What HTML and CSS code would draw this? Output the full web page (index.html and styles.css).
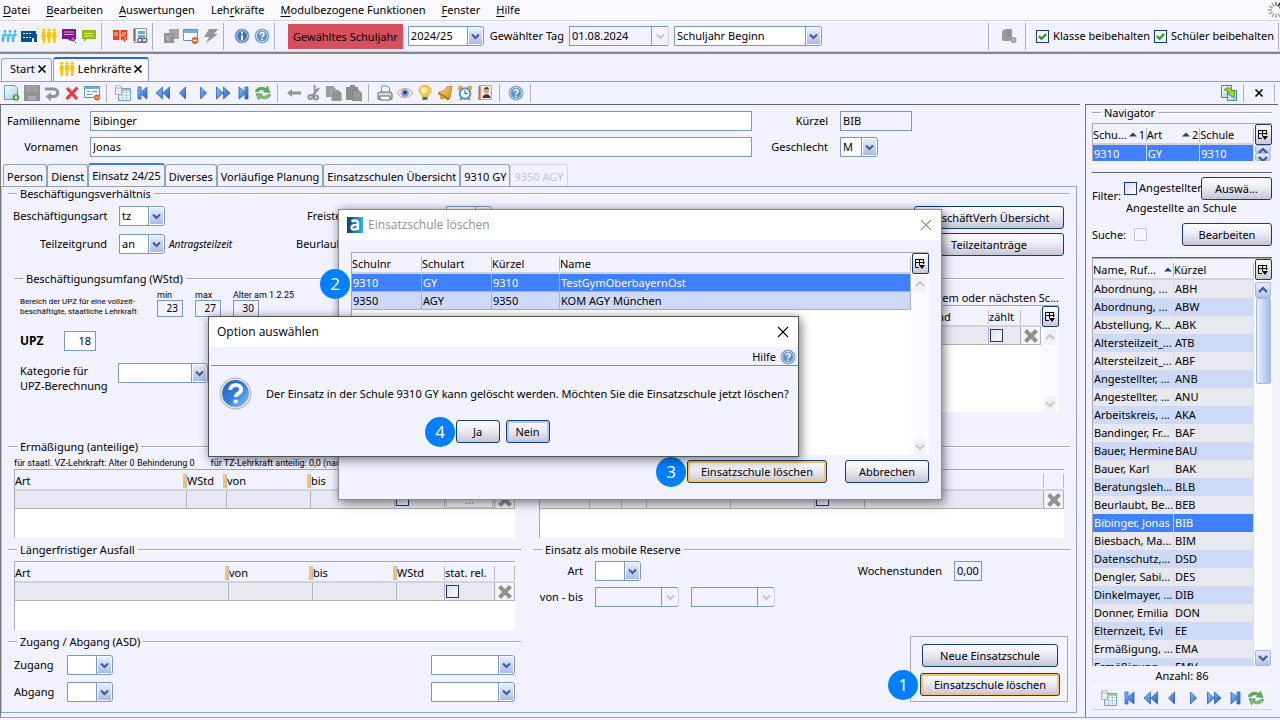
FILE: index.html
```html
<!DOCTYPE html>
<html lang="de">
<head>
<meta charset="utf-8">
<title>Lehrkräfte</title>
<link rel="stylesheet" href="styles.css">
</head>
<body>
<svg class="defs" aria-hidden="true">
<defs>
<linearGradient id="gb" x1="0" y1="0" x2="1" y2="1"><stop offset="0" stop-color="#8ec2ff"/><stop offset="1" stop-color="#1f5fc8"/></linearGradient>
<linearGradient id="gq" x1="0" y1="0" x2="1" y2="1"><stop offset="0" stop-color="#1d62c8"/><stop offset=".5" stop-color="#2f7de0"/><stop offset="1" stop-color="#8fc4ff"/></linearGradient>
<linearGradient id="ga" x1="0" y1="0" x2="1" y2="0"><stop offset="0" stop-color="#10406e"/><stop offset="1" stop-color="#2cb4ea"/></linearGradient>
<linearGradient id="gl" x1="0" y1="0" x2="1" y2="1"><stop offset="0" stop-color="#fff"/><stop offset="1" stop-color="#9ccbf0"/></linearGradient>
<linearGradient id="gy" x1="0" y1="0" x2="1" y2="1"><stop offset="0" stop-color="#ffe27a"/><stop offset="1" stop-color="#c98a10"/></linearGradient>
</defs>
<symbol id="pupils" viewBox="0 0 16 16"><g fill="#3fc0e0"><circle cx="4" cy="3.500" r="1.400"/><circle cx="9" cy="3.500" r="1.400"/><circle cx="14" cy="3.500" r="1.400"/><path d="M2.500 5.500h3v3h-3zM7.500 5.500h3v3h-3zM12.500 5.500h3v3h-3z"/><circle cx="2" cy="7.500" r="1.300"/><circle cx="7" cy="7.500" r="1.300"/><circle cx="12" cy="7.500" r="1.300"/><path d="M.5 9h3.200l-.7 5H1zM5.500 9h3.200L8 14H6zM10.500 9h3.200l-.7 5h-2z"/></g></symbol>
<symbol id="school" viewBox="0 0 16 16"><path d="M0 3h15v3h1v8h-3v-4h-2v4H0z" fill="#0c4f8c"/><path d="M2 5h2v1H2zM5 5h2v1H5zM8 5h2v1H8zM2 9h2v1H2zM5 9h2v1H5zM8 9h2v1H8z" fill="#fff"/></symbol>
<symbol id="staff" viewBox="0 0 16 16"><g fill="#fdc400"><circle cx="2.700" cy="2.200" r="1.600"/><circle cx="8" cy="2.200" r="1.600"/><circle cx="13.300" cy="2.200" r="1.600"/><path d="M1 4h3.400l.6 5h-.8l-.4 6H1.600L1.200 9H.4zM6.300 4h3.400l.6 5h-.8l-.4 6H6.900l-.4-6h-.8zM11.600 4H15l.6 5h-.8l-.4 6h-2.200l-.4-6H11z"/></g></symbol>
<symbol id="board" viewBox="0 0 16 16"><path d="M1 1h14v10h-4l-2 2-2-2H1z" fill="#85148a"/><path d="M3 4h10M3 6.500h10" stroke="#d9a4dc"/><circle cx="12" cy="11" r="2" fill="#b76cbb" stroke="#85148a"/><path d="M14 14l1 1" stroke="#85148a"/></symbol>
<symbol id="chat" viewBox="0 0 16 16"><path d="M1 2h14v9H6l-3 3v-3H1z" fill="#95bd0d"/><path d="M3.500 5.500h9M3.500 8h9" stroke="#e5f0bd"/></symbol>
<symbol id="book" viewBox="0 0 16 16"><path d="M1 2h6.500v10H1zM8.500 2H15v10H8.500z" fill="#e8451f"/><path d="M2 5h4M2 7h4M10 5h4M10 7h3" stroke="#ffc5b3"/><path d="M9 7l5 3-2 .6 2 2.600-1.500 1-1.700-2.700L9 13z" fill="#d52c08" stroke="#fff" stroke-width=".5"/></symbol>
<symbol id="report" viewBox="0 0 16 16"><path d="M2.500.5h12v14h-12z" fill="#eef3fb" stroke="#8795a8"/><path d="M1 2h3M1 4h3M1 6h3M1 8h3M1 10h3M1 12h3" stroke="#6b4a3a"/><path d="M6 3h7v3H6zM6 7h7v3H6z" fill="#6ba4de"/><rect x="5.500" y="10.500" width="5" height="3.500" rx="1.700" fill="#ddd" stroke="#444"/><rect x="10" y="10.500" width="5" height="3.500" rx="1.700" fill="#ddd" stroke="#444"/></symbol>
<symbol id="copyg" viewBox="0 0 16 16"><path d="M6 1h10v10H6z" fill="#a4a4a4"/><path d="M1 5h10v10H1z" fill="#949494"/><path d="M4 12l4-5M4 8v4h4" stroke="#c4c4c4" fill="none"/></symbol>
<symbol id="winminus" viewBox="0 0 16 16"><path d="M.5 1.500h14v11H.5z" fill="#f5f9ff" stroke="#5d93d0"/><path d="M1 2h13v3H1z" fill="#77aee8"/><circle cx="12" cy="12.500" r="3.400" fill="#e8622a"/><path d="M10 12.500h4" stroke="#fff" stroke-width="1.500"/></symbol>
<symbol id="bolt" viewBox="0 0 16 16"><path d="M6 1h9l-4 5h4L3 15l3-6H1z" fill="#969696"/></symbol>
<symbol id="info" viewBox="0 0 16 16"><circle cx="8" cy="8" r="7" fill="#3d74b8" stroke="#8fa9cc"/><circle cx="8" cy="8" r="5.300" fill="none" stroke="#c8dcf2"/><path d="M8 4v1.700M8 7v5" stroke="#fff" stroke-width="2"/></symbol>
<symbol id="help" viewBox="0 0 16 16"><circle cx="8" cy="8" r="7" fill="#5b90ca" stroke="#8fa9cc"/><circle cx="8" cy="8" r="5.600" fill="none" stroke="#cfe1f4"/><path d="M6 6.500C6 3.800 10.200 4 10 6.500 9.800 7.800 8 7.800 8 9.300M8 10.500v1.500" stroke="#fff" stroke-width="1.600" fill="none"/></symbol>
<symbol id="server" viewBox="0 0 16 16"><path d="M2 2l3-1h6v10l-3 2H2L1 12V4z" fill="#9a9a9a"/><path d="M6 4h4M6 6h4M6 8h4" stroke="#808080"/><circle cx="12.500" cy="12" r="3" fill="#999"/><path d="M11 12h3M12.500 10.500v3" stroke="#ccc"/></symbol>
<symbol id="new" viewBox="0 0 16 16"><path d="M.5.500h10l3 3v11H.5z" fill="url(#gl)" stroke="#5d9bd3"/><circle cx="12" cy="12.500" r="3.300" fill="#4a9e3e"/><path d="M10 12.500h4M12 10.500v4" stroke="#fff"/></symbol>
<symbol id="save" viewBox="0 0 16 16"><path d="M0 0h15l1 1v15H0z" fill="#929292"/><path d="M3 1h10v6H3zM4 11h8v4H4z" fill="#a9a9a9"/><path d="M4.500 3h7M4.500 5h7" stroke="#888"/></symbol>
<symbol id="undo" viewBox="0 0 16 16"><path d="M1 4h9a3.500 3.500 0 010 7.500H6" fill="none" stroke="#929292" stroke-width="3"/><path d="M7 7.500V16L1.500 11.500z" fill="#929292"/></symbol>
<symbol id="del" viewBox="0 0 16 16"><path d="M3 3l10 11M13.500 2.500L2.500 14" stroke="#e83c3c" stroke-width="3.200"/></symbol>
<symbol id="formminus" viewBox="0 0 16 16"><path d="M.5 1.500h15v11H.5z" fill="#f5f9ff" stroke="#5d93d0"/><path d="M1 2h14v2H1z" fill="#77aee8"/><path d="M3 6.500h3M8 6.500h5M3 9.500h5" stroke="#6f8fb5"/><circle cx="13" cy="12.500" r="3" fill="#e8622a"/><path d="M11.500 12.500h3" stroke="#fff"/></symbol>
<symbol id="table" viewBox="0 0 16 16"><path d="M3.500 3.500h12v12h-12z" fill="#fff" stroke="#6fa2d8"/><path d="M4 4h11v2H4z" fill="#a9d08e"/><path d="M7.500 4v11M11.500 4v11M4 7.500h11M4 10.500h11M4 13h11" stroke="#a9c6e6" stroke-width=".8"/><path d="M.5 1.500h6v8h-6z" fill="#ececec" stroke="#b0b0b0"/><ellipse cx="3.500" cy="1.800" rx="3" ry="1.300" fill="#fff" stroke="#b0b0b0"/></symbol>
<symbol id="first" viewBox="0 0 16 16"><path d="M3 2h3v5l6-5v12L6 9v5H3z" fill="url(#gb)" stroke="#2b62bd" stroke-width=".8"/></symbol>
<symbol id="rew" viewBox="0 0 16 16"><path d="M7.500 2v12L1 8zM14.500 2v12L8 8z" fill="url(#gb)" stroke="#2b62bd" stroke-width=".8"/></symbol>
<symbol id="prev" viewBox="0 0 16 16"><path d="M10.500 2v12L4.500 8z" fill="url(#gb)" stroke="#2b62bd" stroke-width=".8"/></symbol>
<symbol id="next" viewBox="0 0 16 16"><path d="M5.500 2v12l6-6z" fill="url(#gb)" stroke="#2b62bd" stroke-width=".8"/></symbol>
<symbol id="fwd" viewBox="0 0 16 16"><path d="M1.500 2v12L8 8zM8.500 2v12L15 8z" fill="url(#gb)" stroke="#2b62bd" stroke-width=".8"/></symbol>
<symbol id="last" viewBox="0 0 16 16"><path d="M4 2v12l6-5v5h3V2h-3v5z" fill="url(#gb)" stroke="#2b62bd" stroke-width=".8"/></symbol>
<symbol id="refresh" viewBox="0 0 16 16"><path d="M0 6.500C2 2 7 1 11 3.500L12.500 1 15 7.500 8.500 7 10 5.500C7 4 4 5 3.500 6.500z" fill="#5fae55" stroke="#397f34" stroke-width=".5"/><path d="M16 9.500C14 14 9 15 5 12.500L3.500 15 1 8.500l6.500.500L6 10.500C9 12 12 11 12.500 9.500z" fill="#7cc46e" stroke="#397f34" stroke-width=".5"/></symbol>
<symbol id="back" viewBox="0 0 16 16"><path d="M1 8l5-4v2.500h9v3H6V12z" fill="#939393"/></symbol>
<symbol id="cut" viewBox="0 0 16 16"><path d="M8.500 0L9 9M13 3L6 11" stroke="#939393" stroke-width="2"/><circle cx="4.500" cy="12" r="2" fill="none" stroke="#939393" stroke-width="2"/><circle cx="10" cy="12.500" r="2" fill="none" stroke="#939393" stroke-width="2"/></symbol>
<symbol id="copy" viewBox="0 0 16 16"><path d="M0 1h7l3 3v8H0z" fill="#9c9c9c"/><path d="M5.500 5h7l3 3v8h-10z" fill="#949494" stroke="#bbb" stroke-width=".7"/></symbol>
<symbol id="paste" viewBox="0 0 16 16"><path d="M0 2h4V0h5v2h3v13H0z" fill="#8d8d8d"/><path d="M6.500 5h6l3 3v8h-9z" fill="#979797" stroke="#7d7d7d" stroke-width=".7"/></symbol>
<symbol id="print" viewBox="0 0 16 16"><path d="M4.500 1h6l2 2v5h-8z" fill="#eaf3ff" stroke="#5f94cf"/><path d="M1 8l2-1h10l2 1v6H1z" fill="#d7d7da" stroke="#666"/><path d="M3 11h10v4H3z" fill="#fff" stroke="#666"/></symbol>
<symbol id="eye" viewBox="0 0 16 16"><path d="M0 8c4-6 12-6 16 0-4 6-12 6-16 0z" fill="#f8ece2" stroke="#d79d78"/><circle cx="8" cy="8" r="3.800" fill="#6a9ae6"/><circle cx="8" cy="7.500" r="1.500" fill="#102a60"/></symbol>
<symbol id="bulb" viewBox="0 0 16 16"><path d="M5 10C-1 5 3 .5 8 .5s9 4.500 3 9.500v2H5z" fill="#ffc94d" stroke="#d99820" stroke-width=".7"/><circle cx="7" cy="5" r="3" fill="#fff1b8"/><path d="M5.500 12h5v3h-5z" fill="#666"/></symbol>
<symbol id="bell" viewBox="0 0 16 16"><path d="M15 1L13 13l-2 2L1 9l1-2c4 0 6-2 8-5z" fill="url(#gy)" stroke="#a87410" stroke-width=".7"/><circle cx="5" cy="12.500" r="2" fill="#d99a1c"/><path d="M2 8l10 6" stroke="#8a5c08"/></symbol>
<symbol id="clock" viewBox="0 0 16 16"><circle cx="3.500" cy="3" r="2.500" fill="#e6a33e"/><circle cx="12.500" cy="3" r="2.500" fill="#e6a33e"/><circle cx="8" cy="8.500" r="6.300" fill="#4f94d6"/><circle cx="8" cy="8.500" r="4.300" fill="#f3f8fc"/><path d="M8 5.500v3h2.500" stroke="#345" fill="none"/><path d="M3 15l2-2M13 15l-2-2" stroke="#777" stroke-width="1.500"/></symbol>
<symbol id="contact" viewBox="0 0 16 16"><path d="M2.500.500h12v14h-12z" fill="#f1ece6" stroke="#aaa"/><path d="M1 2h3M1 4h3M1 6h3M1 8h3M1 10h3M1 12h3M1 14h3" stroke="#a8502f"/><circle cx="9.500" cy="6" r="2.500" fill="#d9a27a"/><path d="M7 5c0-4 5-4 5 0l-1-1H8zM5.500 13c0-5 8-5 8 0z" fill="#463228"/></symbol>
<symbol id="detach" viewBox="0 0 16 16"><path d="M.5.500h10v12H.5z" fill="url(#gl)" stroke="#3d86c6"/><path d="M6.500 5.500h9v10h-9z" fill="url(#gl)" stroke="#3d86c6"/><path d="M3 5c2-3 7-3 8 1l3-1-1 8-6-4 2-1C8 6 6 5 3 5z" fill="#a4dc1c" stroke="#4b8c10" stroke-width=".8"/></symbol>
<symbol id="cols" viewBox="0 0 12 12"><path d="M1 1.500h9M1.500 1v8.500H5M1 4.500h9.500M5.500 1v6M9.500 1v5" fill="none" stroke="#000"/><path d="M5 7h6l-3 4z"/></symbol>
<symbol id="x" viewBox="0 0 16 16"><path d="M2.500 2.500l11 11M13.500 2.500l-11 11" stroke="#909090" stroke-width="4"/></symbol>
<symbol id="close" viewBox="0 0 12 12"><path d="M1 1l10 10M11 1L1 11" stroke="currentColor" stroke-width="1.100"/></symbol>
<symbol id="closeb" viewBox="0 0 10 10"><path d="M1.500 1.500l7 7M8.500 1.500l-7 7" stroke="#000" stroke-width="1.600"/></symbol>
<symbol id="up" viewBox="0 0 10 8"><path d="M1 6l4-4 4 4" fill="none" stroke="currentColor" stroke-width="2.200"/></symbol>
<symbol id="down" viewBox="0 0 10 8"><path d="M1 2l4 4 4-4" fill="none" stroke="currentColor" stroke-width="2.200"/></symbol>
<symbol id="tri" viewBox="0 0 8 5"><path d="M0 4.500L4 .5l4 4z" fill="#24415e"/></symbol>
<symbol id="spin" viewBox="0 0 16 16"><g stroke-width="1.600"><path d="M8 0v4" stroke="#777"/><path d="M12 1l-2 3.500" stroke="#333"/><path d="M15 4l-3.500 2" stroke="#111"/><path d="M4 1l2 3.500M1 4l3.500 2M0 8h4M1 12l3.500-2M4 15l2-3.500M8 12v4M12 15l-2-3.500" stroke="#aaa"/></g></symbol>
<symbol id="question" viewBox="0 0 32 32"><circle cx="16" cy="16" r="15" fill="#e9e7e2" stroke="#b7b5b0"/><circle cx="16" cy="16" r="13" fill="url(#gq)"/><path d="M11 12.500c0-6.500 10.500-6 10.500-.5 0 4-5.300 3.700-5.300 7.500M16.200 22v3.500" fill="none" stroke="#fff" stroke-width="3.800"/></symbol>
<symbol id="app" viewBox="0 0 16 16"><path d="M0 0h16v16H0z" fill="url(#ga)"/><path d="M4.500 4.500c3-1.800 6.500-1 6.500 1.500v7M11 8C7 7.500 4.500 8.500 4.500 10.500c0 3 4.500 2.700 6.500 0" fill="none" stroke="#fff" stroke-width="2.300"/></symbol>
</svg>

<nav class="menubar">
<a href="#"><u>D</u>atei</a><a href="#"><u>B</u>earbeiten</a><a href="#"><u>A</u>uswertungen</a><a href="#">Leh<u>r</u>kräfte</a><a href="#"><u>M</u>odulbezogene Funktionen</a><a href="#"><u>F</u>enster</a><a href="#"><u>H</u>ilfe</a>
<svg class="ic busy"><use href="#spin"/></svg>
</nav>

<header class="toolbar">
<div class="tools">
<button class="tb" aria-label="Schüler"><svg class="ic"><use href="#pupils"/></svg></button><button class="tb" aria-label="Schule"><svg class="ic"><use href="#school"/></svg></button><button class="tb" aria-label="Lehrkräfte"><svg class="ic"><use href="#staff"/></svg></button><button class="tb" aria-label="Klassen"><svg class="ic"><use href="#board"/></svg></button><button class="tb" aria-label="Unterricht"><svg class="ic"><use href="#chat"/></svg></button>
<i class="sep"></i>
<button class="tb" aria-label="Katalog"><svg class="ic"><use href="#book"/></svg></button><button class="tb" aria-label="Berichte"><svg class="ic"><use href="#report"/></svg></button>
<i class="sep"></i>
<button class="tb" aria-label="Übernehmen"><svg class="ic"><use href="#copyg"/></svg></button><button class="tb" aria-label="Fenster schließen"><svg class="ic"><use href="#winminus"/></svg></button><button class="tb" aria-label="Ausführen"><svg class="ic"><use href="#bolt"/></svg></button>
<i class="sep"></i>
<button class="tb" aria-label="Info"><svg class="ic"><use href="#info"/></svg></button><button class="tb" aria-label="Hilfe"><svg class="ic"><use href="#help"/></svg></button>
<i class="sep"></i>
</div>
<label class="year" for="jahr">Gewähltes Schuljahr</label>
<select id="jahr" class="w75"><option>2024/25</option></select>
<label for="tag">Gewählter Tag</label>
<select id="tag" class="w100" disabled><option>01.08.2024</option></select>
<select class="w148" aria-label="Stichtag"><option>Schuljahr Beginn</option></select>
<div class="tools right">
<i class="sep"></i><button class="tb" aria-label="Server"><svg class="ic"><use href="#server"/></svg></button><i class="sep"></i>
<label class="check"><input type="checkbox" checked>Klasse beibehalten</label>
<label class="check"><input type="checkbox" checked>Schüler beibehalten</label>
<i class="sep"></i>
</div>
</header>

<div class="doctabs">
<div class="doctab">Start<button class="tb" aria-label="Start schließen"><svg class="ic10"><use href="#closeb"/></svg></button></div>
<div class="doctab on"><svg class="ic"><use href="#staff"/></svg>Lehrkräfte<button class="tb" aria-label="Lehrkräfte schließen"><svg class="ic10"><use href="#closeb"/></svg></button></div>
</div>

<div class="subbar tools">
<button class="tb" aria-label="Neu"><svg class="ic"><use href="#new"/></svg></button><button class="tb" aria-label="Speichern"><svg class="ic"><use href="#save"/></svg></button><button class="tb" aria-label="Rückgängig"><svg class="ic"><use href="#undo"/></svg></button><button class="tb" aria-label="Löschen"><svg class="ic"><use href="#del"/></svg></button><button class="tb" aria-label="Maske schließen"><svg class="ic"><use href="#formminus"/></svg></button>
<i class="sep"></i>
<button class="tb" aria-label="Liste"><svg class="ic"><use href="#table"/></svg></button><button class="tb" aria-label="Erster"><svg class="ic"><use href="#first"/></svg></button><button class="tb" aria-label="Seite zurück"><svg class="ic"><use href="#rew"/></svg></button><button class="tb" aria-label="Zurück"><svg class="ic"><use href="#prev"/></svg></button><button class="tb" aria-label="Weiter"><svg class="ic"><use href="#next"/></svg></button><button class="tb" aria-label="Seite weiter"><svg class="ic"><use href="#fwd"/></svg></button><button class="tb" aria-label="Letzter"><svg class="ic"><use href="#last"/></svg></button><button class="tb" aria-label="Aktualisieren"><svg class="ic"><use href="#refresh"/></svg></button>
<i class="sep"></i>
<button class="tb" aria-label="Vorherige Maske"><svg class="ic"><use href="#back"/></svg></button><button class="tb" aria-label="Ausschneiden"><svg class="ic"><use href="#cut"/></svg></button><button class="tb" aria-label="Kopieren"><svg class="ic"><use href="#copy"/></svg></button><button class="tb" aria-label="Einfügen"><svg class="ic"><use href="#paste"/></svg></button>
<i class="sep"></i>
<button class="tb" aria-label="Drucken"><svg class="ic"><use href="#print"/></svg></button><button class="tb" aria-label="Vorschau"><svg class="ic"><use href="#eye"/></svg></button><button class="tb" aria-label="Hinweis"><svg class="ic"><use href="#bulb"/></svg></button><button class="tb" aria-label="Glocke"><svg class="ic"><use href="#bell"/></svg></button><button class="tb" aria-label="Wiedervorlage"><svg class="ic"><use href="#clock"/></svg></button><button class="tb" aria-label="Kontakte"><svg class="ic"><use href="#contact"/></svg></button>
<i class="sep"></i>
<button class="tb" aria-label="Hilfe"><svg class="ic"><use href="#help"/></svg></button>
<i class="sep"></i>
<div class="tools right">
<button class="tb" aria-label="Abdocken"><svg class="ic"><use href="#detach"/></svg></button><i class="sep"></i><button class="tb wide" aria-label="Schließen"><svg class="ic10"><use href="#closeb"/></svg></button><i class="sep end"></i>
</div>
</div>

<div class="work">
<main class="editor">
<div class="person">
<label for="fn">Familienname</label><input id="fn" type="text" value="Bibinger">
<label for="kz">Kürzel</label><input id="kz" class="ro" type="text" value="BIB" readonly>
<label for="vn">Vornamen</label><input id="vn" type="text" value="Jonas">
<label for="gs">Geschlecht</label><select id="gs" class="w38"><option>M</option></select>
</div>
<div class="tabs">
<button>Person</button><button>Dienst</button><button class="on">Einsatz 24/25</button><button>Diverses</button><button>Vorläufige Planung</button><button>Einsatzschulen Übersicht</button><button>9310 GY</button><button disabled>9350 AGY</button>
</div>
<div class="page">
<h3 class="legend">Beschäftigungsverhältnis</h3>
<div class="employ">
<div class="fields">
<label for="ba">Beschäftigungsart</label><select id="ba" class="w45"><option>tz</option></select><span></span><label class="lead indent" for="fr">Freistellungsmodell</label><select id="fr" class="w45"><option></option></select>
<label for="tg">Teilzeitgrund</label><select id="tg" class="w45"><option>an</option></select><em>Antragsteilzeit</em><label class="lead" for="bu">Beurlaubungsgrund</label><select id="bu" class="w45"><option></option></select>
</div>
<div class="stack"><button class="btn">BeschäftVerh Übersicht</button><button class="btn">Teilzeitanträge</button></div>
</div>

<h3 class="legend inset">Beschäftigungsumfang (WStd)</h3>
<div class="volume">
<div class="upz">
<div class="range"><p class="tiny">Bereich der UPZ für eine vollzeit-<br>beschäftigte, staatliche Lehrkraft</p>
<label>min<input class="ro num" type="text" value="23" readonly></label><label>max<input class="ro num" type="text" value="27" readonly></label><label>Alter am 1.2.25<input class="ro num" type="text" value="30" readonly></label></div>
<div class="line"><label for="up"><b>UPZ</b></label><input id="up" class="num w32" type="text" value="18"></div>
<div class="line cat"><label for="kt">Kategorie für<br>UPZ-Berechnung</label><select id="kt" class="w90"><option></option></select></div>
</div>
<div class="hours">
<p class="cap">Stunden in diesem oder nächsten Sc...</p>
<div class="gridbox tall">
<table><colgroup><col><col class="c68"><col class="c32"><col class="c20"></colgroup>
<thead><tr><th>Schule</th><th>Stand</th><th>zählt</th><th></th></tr></thead>
<tbody><tr><td></td><td></td><td><input type="checkbox" aria-label="zählt"></td><td><button class="xb" aria-label="Zeile löschen"><svg class="ic"><use href="#x"/></svg></button></td></tr></tbody></table>
<div class="vbar off"><button class="colbtn" aria-label="Spalten"><svg class="ic12"><use href="#cols"/></svg></button><button class="arr" aria-label="Hoch"><svg class="ic10"><use href="#up"/></svg></button><i></i><button class="arr" aria-label="Runter"><svg class="ic10"><use href="#down"/></svg></button></div>
</div>
</div>
</div>

<div class="cols">
<div class="col">
<h3 class="legend">Ermäßigung (anteilige)</h3>
<p class="note"><span>für staatl. VZ-Lehrkraft: Alter 0 Behinderung 0</span><span>für TZ-Lehrkraft anteilig: 0,0 (nach Antrag)</span></p>
<div class="gridbox short">
<table><colgroup><col><col class="c40"><col class="c84"><col class="c84"><col class="c50"><col class="c50"><col class="c20"></colgroup>
<thead><tr><th class="m">Art</th><th class="m">WStd</th><th class="m">von</th><th class="m">bis</th><th>fest</th><th></th><th></th></tr></thead>
<tbody><tr><td></td><td></td><td></td><td></td><td><input type="checkbox" aria-label="fest"></td><td><button class="dots">...</button></td><td><button class="xb" aria-label="Zeile löschen"><svg class="ic"><use href="#x"/></svg></button></td></tr></tbody></table>
</div>
<h3 class="legend">Längerfristiger Ausfall</h3>
<div class="gridbox short gap">
<table><colgroup><col><col class="c84"><col class="c84"><col class="c48"><col class="c50"><col class="c20"></colgroup>
<thead><tr><th class="m">Art</th><th class="m">von</th><th class="m">bis</th><th>WStd</th><th>stat. rel.</th><th></th></tr></thead>
<tbody><tr><td></td><td></td><td></td><td></td><td><input type="checkbox" aria-label="stat. rel."></td><td><button class="xb" aria-label="Zeile löschen"><svg class="ic"><use href="#x"/></svg></button></td></tr></tbody></table>
</div>
<h3 class="legend">Zugang / Abgang (ASD)</h3>
<div class="access">
<label for="zu">Zugang</label><select id="zu" class="w45"><option></option></select><select class="w84" aria-label="Zugang am"><option></option></select>
<label for="ab">Abgang</label><select id="ab" class="w45"><option></option></select><select class="w84" aria-label="Abgang am"><option></option></select>
</div>
</div>
<div class="col">
<h3 class="legend">Mehrungen</h3>
<p class="note"></p>
<div class="gridbox short">
<table><colgroup><col class="c50"><col class="c32"><col class="c25"><col class="c84"><col class="c84"><col class="c50"><col><col class="c20"></colgroup>
<thead><tr><th>Art</th><th></th><th></th><th></th><th></th><th></th><th></th><th></th></tr></thead>
<tbody><tr><td></td><td></td><td></td><td></td><td></td><td><input type="checkbox" aria-label="fest"></td><td></td><td><button class="xb" aria-label="Zeile löschen"><svg class="ic"><use href="#x"/></svg></button></td></tr></tbody></table>
</div>
<h3 class="legend">Einsatz als mobile Reserve</h3>
<div class="reserve">
<label for="ma">Art</label><div class="line"><select id="ma" class="w45"><option></option></select><label class="push" for="ws">Wochenstunden</label><input id="ws" class="ro w28" type="text" value="0,00" readonly></div>
<label for="vb">von - bis</label><div class="line"><select id="vb" class="w84" disabled><option></option></select><select class="w84" aria-label="bis" disabled><option></option></select></div>
</div>
<div class="actions"><span class="badge b1">1</span><button class="btn">Neue Einsatzschule</button><button class="btn hot">Einsatzschule löschen</button></div>
</div>
</div>
</div>
</main>

<aside class="navi">
<h3 class="legend">Navigator</h3>
<div class="gridbox schools">
<table><colgroup><col><col><col></colgroup>
<thead><tr><th><div class="hd">Schu...<svg class="tri"><use href="#tri"/></svg>1</div></th><th><div class="hd">Art<svg class="tri"><use href="#tri"/></svg>2</div></th><th>Schule</th></tr></thead>
<tbody><tr class="sel"><td>9310</td><td>GY</td><td>9310</td></tr></tbody></table>
<div class="vbar mini"><button class="colbtn" aria-label="Spalten"><svg class="ic12"><use href="#cols"/></svg></button><button class="arr" aria-label="Hoch"><svg class="ic10"><use href="#up"/></svg></button><button class="arr" aria-label="Runter"><svg class="ic10"><use href="#down"/></svg></button></div>
</div>
<hr>
<div class="filter"><span>Filter:</span><label class="check"><input type="checkbox">Angestellter</label><button class="btn">Auswä...</button></div>
<p class="ftext">Angestellte an Schule</p>
<div class="search"><label for="su">Suche:</label><input id="su" type="checkbox" disabled><button class="btn">Bearbeiten</button></div>
<hr>
<div class="gridbox list">
<div class="clip"><table><colgroup><col class="c81"><col></colgroup>
<thead><tr><th><div class="hd">Name, Ruf...<svg class="tri"><use href="#tri"/></svg></div></th><th>Kürzel</th></tr></thead>
<tbody>
<tr><td>Abordnung, ...</td><td>ABH</td></tr><tr><td>Abordnung, ...</td><td>ABW</td></tr><tr><td>Abstellung, K...</td><td>ABK</td></tr><tr><td>Altersteilzeit_...</td><td>ATB</td></tr><tr><td>Altersteilzeit_...</td><td>ABF</td></tr><tr><td>Angestellter, ...</td><td>ANB</td></tr><tr><td>Angestellter, ...</td><td>ANU</td></tr><tr><td>Arbeitskreis, ...</td><td>AKA</td></tr><tr><td>Bandinger, Fr...</td><td>BAF</td></tr><tr><td>Bauer, Hermine</td><td>BAU</td></tr><tr><td>Bauer, Karl</td><td>BAK</td></tr><tr><td>Beratungsleh...</td><td>BLB</td></tr><tr><td>Beurlaubt, Be...</td><td>BEB</td></tr><tr class="sel"><td>Bibinger, Jonas</td><td>BIB</td></tr><tr><td>Biesbach, Ma...</td><td>BIM</td></tr><tr><td>Datenschutz,...</td><td>DSD</td></tr><tr><td>Dengler, Sabi...</td><td>DES</td></tr><tr><td>Dinkelmayer, ...</td><td>DIB</td></tr><tr><td>Donner, Emilia</td><td>DON</td></tr><tr><td>Elternzeit, Evi</td><td>EE</td></tr><tr><td>Ermäßigung, ...</td><td>EMA</td></tr><tr><td>Ermäßigung, ...</td><td>EMV</td></tr>
</tbody></table></div>
<div class="vbar"><button class="colbtn" aria-label="Spalten"><svg class="ic12"><use href="#cols"/></svg></button><button class="arr" aria-label="Hoch"><svg class="ic10"><use href="#up"/></svg></button><b class="thumb"></b><i></i><button class="arr" aria-label="Runter"><svg class="ic10"><use href="#down"/></svg></button></div>
</div>
<p class="count">Anzahl: 86</p>
<div class="pager tools"><button class="tb" aria-label="Liste"><svg class="ic"><use href="#table"/></svg></button><button class="tb" aria-label="Erster"><svg class="ic"><use href="#first"/></svg></button><button class="tb" aria-label="Seite zurück"><svg class="ic"><use href="#rew"/></svg></button><button class="tb" aria-label="Zurück"><svg class="ic"><use href="#prev"/></svg></button><button class="tb" aria-label="Weiter"><svg class="ic"><use href="#next"/></svg></button><button class="tb" aria-label="Seite weiter"><svg class="ic"><use href="#fwd"/></svg></button><button class="tb" aria-label="Letzter"><svg class="ic"><use href="#last"/></svg></button><button class="tb" aria-label="Aktualisieren"><svg class="ic"><use href="#refresh"/></svg></button></div>
</aside>
</div>

<section class="window pick" role="dialog" aria-label="Einsatzschule löschen">
<div class="title dim"><svg class="ic"><use href="#app"/></svg>Einsatzschule löschen<button class="tb" aria-label="Schließen"><svg class="ic12"><use href="#close"/></svg></button></div>
<div class="body">
<div class="gridbox choose">
<table><colgroup><col class="c70"><col class="c70"><col class="c68"><col></colgroup>
<thead><tr><th>Schulnr</th><th>Schulart</th><th>Kürzel</th><th>Name</th></tr></thead>
<tbody><tr class="sel"><td>9310</td><td>GY</td><td>9310</td><td>TestGymOberbayernOst</td></tr><tr class="alt"><td>9350</td><td>AGY</td><td>9350</td><td>KOM AGY München</td></tr></tbody></table>
<div class="vbar off"><button class="colbtn" aria-label="Spalten"><svg class="ic12"><use href="#cols"/></svg></button><button class="arr" aria-label="Hoch"><svg class="ic10"><use href="#up"/></svg></button><i></i><button class="arr" aria-label="Runter"><svg class="ic10"><use href="#down"/></svg></button></div>
</div>
<div class="foot"><button class="btn hot">Einsatzschule löschen</button><button class="btn">Abbrechen</button></div>
</div>
<span class="badge b2">2</span><span class="badge b3">3</span>
</section>

<section class="window ask" role="dialog" aria-label="Option auswählen">
<div class="title">Option auswählen<button class="tb" aria-label="Schließen"><svg class="ic12"><use href="#close"/></svg></button></div>
<div class="helpline">Hilfe<button class="tb" aria-label="Hilfe"><svg class="ic"><use href="#help"/></svg></button></div>
<div class="msg"><svg class="ic32"><use href="#question"/></svg><p>Der Einsatz in der Schule 9310 GY kann gelöscht werden. Möchten Sie die Einsatzschule jetzt löschen?</p></div>
<div class="yesno"><button class="btn">Ja</button><button class="btn focus">Nein</button></div>
<span class="badge b4">4</span>
</section>
</body>
</html>
```
FILE: styles.css
```css
* { box-sizing: border-box; }
body {
  margin: 0; height: 100vh; display: flex; flex-direction: column; overflow: hidden; position: relative;
  background: #f2f2ff; color: #000; font: 11px/14px "Noto Sans", "Open Sans", sans-serif;
}
button, input, select { font: inherit; color: inherit; margin: 0; }
p, h3 { margin: 0; font-size: 11px; font-weight: normal; }
.defs { position: absolute; width: 0; height: 0; }
.ic { width: 16px; height: 16px; flex: none; display: block; }
.ic10 { width: 10px; height: 10px; display: block; }
.ic12 { width: 12px; height: 12px; display: block; }
.ic32 { width: 33px; height: 33px; flex: none; }

.menubar { display: flex; height: 21px; align-items: center; gap: 16px; padding-left: 3px; background: #f9f9ff; border-bottom: 1px solid #d2d2e4; line-height: 18px; flex: none; }
.menubar a { color: #000; text-decoration: none; white-space: nowrap; }
.menubar u { text-underline-offset: 2px; }
.busy { margin-left: auto; margin-right: -4px; }

.toolbar { display: flex; align-items: center; gap: 5px; height: 33px; flex: none; border-top: 1px solid #fff; border-bottom: 2px solid #868686; box-shadow: inset 0 -1px #d0d0d8; padding-bottom: 2px; white-space: nowrap; }
.toolbar > .tools:first-child { margin-left: -1px; }
.tools { display: flex; align-items: center; }
.right { margin-left: auto; }
.tb { border: 0; background: none; padding: 0; width: 20px; height: 18px; display: flex; align-items: center; justify-content: center; flex: none; }
.tb.wide { width: 30px; }
.sep { width: 1px; height: 27px; background: #b0b0b4; margin: 0 8px 0 2px; }
.toolbar .right .sep { margin: 0 10px 0 0; }
.toolbar .right .sep:last-child { margin: 0 1px 0 0; }
.toolbar .right .tb { margin-right: 6px; }
.year { background: #d5505c; height: 25px; line-height: 25px; padding: 0 5px; margin-right: 0; }
.toolbar label.check { margin-right: 4px; }
.check { display: flex; align-items: center; gap: 4px; }

input[type=checkbox] { appearance: none; width: 13px; height: 13px; border: 1px solid #163c78; background: linear-gradient(135deg, #dcdce0, #fff); display: block; flex: none; }
input[type=checkbox]:checked { background: url("data:image/svg+xml,%3Csvg xmlns='http://www.w3.org/2000/svg' viewBox='0 0 11 11'%3E%3Cpath d='M2 5l2.500 3L9 3' fill='none' stroke='%2318a018' stroke-width='2'/%3E%3C/svg%3E"), #f4f4f8; }
input[type=checkbox]:disabled { border-color: #c8c8d0; background: #f6f6fa; }
input[type=text] { border: 1px solid #7b99bf; background: #fff; height: 20px; padding: 0 2px 1px; width: 100%; }
input[type=text].ro { background: #f2f2ff; }
input[type=text].num { text-align: right; padding-right: 4px; }
select {
  appearance: none; height: 20px; padding: 0 18px 0 2px; border: 1px solid #7b99bf; border-radius: 0 3px 3px 0; outline: 0;
  background:
    url("data:image/svg+xml,%3Csvg xmlns='http://www.w3.org/2000/svg' viewBox='0 0 9 7'%3E%3Cpath d='M1 1.500l3.500 3.500L8 1.500' fill='none' stroke='%23405c8c' stroke-width='2'/%3E%3C/svg%3E") right 3px center / 9px 7px no-repeat,
    linear-gradient(#e6edfd, #aabbe4) right 1px center / 13px calc(100% - 2px) no-repeat,
    linear-gradient(#7b99bf, #7b99bf) right 15px center / 1px 100% no-repeat, #fff;
}
select:disabled {
  opacity: 1; color: #000; border-right-color: #d0d0dc;
  background:
    url("data:image/svg+xml,%3Csvg xmlns='http://www.w3.org/2000/svg' viewBox='0 0 9 7'%3E%3Cpath d='M1 1.500l3.500 3.500L8 1.500' fill='none' stroke='%23c4c4cc' stroke-width='2'/%3E%3C/svg%3E") right 3px center / 9px 7px no-repeat,
    linear-gradient(#7b99bf, #7b99bf) right 16px center / 1px 100% no-repeat, #f2f2ff;
}
#jahr { margin-right: 1px; }
.w28 { width: 28px !important; }
.w32 { width: 32px !important; }
.w38 { width: 38px; }
.w45 { width: 46px; }
.w75 { width: 76px; }
.w84 { width: 84px; }
.w90 { width: 90px; }
.w100 { width: 100px; }
.w148 { width: 148px; }

.btn { height: 23px; border: 1px solid #143c78; border-radius: 3px; background: linear-gradient(#fdfdff, #ececf6 45%, #c6c6d2); padding: 0 8px; white-space: nowrap; }
.btn.hot { box-shadow: inset 0 0 0 2px #fbc45e; }
.btn.focus { box-shadow: inset 0 0 0 2px #b4c6f4; }

.doctabs { display: flex; align-items: flex-end; gap: 1px; height: 28px; padding-left: 1px; border-bottom: 1px solid #90a2bc; flex: none; }
.doctab { height: 23px; display: flex; align-items: center; border: 1px solid #8ea4c4; border-bottom: 0; border-radius: 3px 3px 0 0; padding: 0 0 2px 8px; }
.doctab .tb { width: 14px; margin-right: 2px; }
.doctab.on { height: 24px; background: #fafaff; border-top: 2px solid #2b62d8; padding-bottom: 3px; padding-left: 5px; gap: 3px; }
.doctab.on .tb { margin: 0 3px 0 -3px; }
.subbar { height: 22px; padding-left: 2px; flex: none; }
.subbar .sep { height: 18px; margin: 0 6px 0 4px; }
.subbar .right .sep { margin: 0 0 0 4px; }
.subbar .right .end { margin: 0 5px 0 0; }

.work { flex: 1; min-height: 0; display: grid; grid-template-columns: minmax(0, 1fr) 193px; gap: 5px; padding-right: 2px; border-bottom: 1px solid #90a2bc; margin-bottom: 2px; }
.editor { border-top: 1px solid #666; border-left: 1px solid #777; padding-top: 6px; display: flex; flex-direction: column; min-width: 0; }
.person { display: grid; grid-template-columns: 71px 1fr 64px 72px; gap: 6px 12px; padding: 0 168px 0 6px; align-items: center; }
.person label { text-align: right; }
.tabs { display: flex; align-items: flex-end; padding: 6px 0 0 2px; }
.tabs button { height: 22px; border: 1px solid #8ea4c4; border-bottom: 0; border-radius: 3px 3px 0 0; background: none; padding: 2px 3px 0; white-space: nowrap; }
.tabs .on { height: 23px; border-top: 2px solid #3c7af0; padding-top: 0; }
.tabs button:disabled { color: #c4c4cc; border-color: #d4d4e0; }
.page { flex: 1; border: 1px solid #90a2bc; border-left: 1px solid #b4c0d4; margin: 0 3px 4px 0; padding-left: 6px; }
.legend { display: flex; align-items: center; gap: 3px; height: 14px; white-space: nowrap; }
.legend::before, .legend::after { content: ""; height: 2px; background: linear-gradient(#a8a8b0 50%, #fff 50%); width: 9px; flex: none; }
.legend::after { flex: 1; }
.page > .legend { margin-right: 6px; }
.page > .legend.inset { margin: 14px 12px 0 6px; }
.employ { display: flex; justify-content: space-between; padding: 5px 12px 0 5px; height: 57px; }
.fields { display: grid; grid-template-columns: 94px 46px 107px 138px 46px; column-gap: 12px; row-gap: 8px; align-content: start; align-items: center; }
.fields label { text-align: right; }
.fields em, .fields > span { margin-left: -8px; font-size: 10px; }
.fields .lead { text-align: left; white-space: nowrap; }
.fields .indent { padding-left: 11px; }
.stack { display: flex; flex-direction: column; gap: 4px; width: 150px; }
.volume { display: grid; grid-template-columns: 513fr 537fr; gap: 12px; padding: 4px 12px 0 12px; height: 154px; }
.range { display: flex; gap: 12px; height: 29px; }
.tiny { font-family: Roboto, sans-serif; font-size: 8px; line-height: 10px; width: 125px; padding-top: 7px; white-space: nowrap; }
.range label { width: 26px; font: 9px/10px Roboto, sans-serif; white-space: nowrap; display: flex; flex-direction: column; }
.range input[type=text] { height: 17px; font: 10px/14px "Noto Sans", sans-serif; flex: none; }
.line { display: flex; align-items: center; gap: 12px; }
.upz > .line { margin-top: 12px; }
.upz > .line label { width: 32px; font-size: 12px; }
.upz > .cat { align-items: flex-start; }
.upz > .cat label { width: 86px; font-size: 11px; line-height: 15px; white-space: nowrap; }
.cap { text-align: right; padding-right: 5px; height: 14px; }
.hours { padding-top: 1px; }

.gridbox { display: flex; background: #fff; border-top: 1px solid #a8a8b0; border-left: 1px solid #a8a8b0; }
.gridbox table { flex: 1; min-width: 0; width: 100%; table-layout: fixed; border-spacing: 0; align-self: flex-start; }
.gridbox th { height: 21px; padding: 2px 0 0; text-align: left; font-weight: normal; white-space: nowrap; border-bottom: 2px solid #d2d2dc;
  background: linear-gradient(#b8b8be, #b8b8be) right 4px / 1px 14px no-repeat, #f2f2ff; overflow: hidden; }
.gridbox th.m { background: linear-gradient(#b8b8be, #b8b8be) right 4px / 1px 14px no-repeat, linear-gradient(#fdc25e, #fdc25e) right 1px top 4px / 3px 14px no-repeat, #f2f2ff; }
.gridbox td { height: 18px; padding: 0 0 0 1px; background: #e8e8f0; border-right: 1px solid #b0b0b8; border-bottom: 1px solid #b0b0b8; white-space: nowrap; overflow: hidden; }
.gridbox .sel td { background: #4080ff; color: #fff; }
.gridbox .alt td { background: #ccdaf7; }
.c20 { width: 20px; } .c25 { width: 25px; } .c32 { width: 32px; } .c40 { width: 40px; } .c48 { width: 48px; } .c50 { width: 50px; } .c68 { width: 68px; } .c70 { width: 70px; } .c81 { width: 81px; } .c84 { width: 84px; }
.tall { height: 107px; margin-right: 5px; }
.short { height: 69px; margin: 0 6px 5px 6px; }
.short.gap { margin-top: 4px; }
.xb { border: 0; padding: 0 1px; background: #f4f4f8; height: 17px; width: 18px; display: flex; align-items: center; }
.dots { display: block; width: 47px; height: 16px; border: 1px solid #c8c8d0; background: #f4f4f8; padding: 0; line-height: 12px; color: #888; }
.vbar { width: 18px; flex: none; display: flex; flex-direction: column; align-items: center; background: #fafaff; }
.vbar i { flex: 1; }
.colbtn { width: 17px; height: 21px; flex: none; padding: 0; border: 1px solid #143c78; border-radius: 2px; background: linear-gradient(#fff, #c8c8d4); display: grid; place-items: center; margin-bottom: 2px; }
.arr { width: 16px; height: 16px; flex: none; padding: 0; border: 1px solid #a9b9da; border-radius: 2px; background: linear-gradient(#e6edfd, #b4c4ea); color: #405c8c; display: grid; place-items: center; }
.off .arr { border: 0; width: 12px; background: #f2f2f4; color: #c8c8cc; }
.thumb { width: 15px; height: 86px; flex: none; border: 1px solid #a9b9da; border-radius: 2px; background: linear-gradient(90deg, #e8effe, #a6bcec); }

.cols { display: grid; grid-template-columns: 513fr 537fr; gap: 12px; padding-right: 6px; }
.col { min-width: 0; }
.note { height: 15px; padding: 4px 0 0 6px; font: 9px/11px Roboto, sans-serif; display: flex; gap: 16px; white-space: nowrap; overflow: hidden; }
.access { display: grid; grid-template-columns: 41px 46px 1fr; gap: 7px 12px; padding: 6px 6px 0; align-items: center; }
.access .w84 { justify-self: end; }
.reserve { display: grid; grid-template-columns: 50px 1fr; gap: 6px 12px; padding: 4px 88px 0 0; align-items: center; }
.reserve > label { text-align: right; }
.push { margin-left: auto; }
.actions { position: relative; width: 158px; margin: 29px 2px 0 auto; border: 1px solid #a8a8b0; padding: 7px 7px 5px 9px; display: grid; gap: 6px; justify-items: center; }
.actions .btn { width: 136px; }
.actions .btn.hot { width: 140px; }

.navi { border-top: 1px solid #666; border-left: 1px solid #777; padding: 1px 6px 0; display: flex; flex-direction: column; min-height: 0; }
.navi > * { flex: none; }
.schools { height: 38px; margin-top: 3px; overflow: hidden; }
.navi th { background-color: #f2f2ff; }
.navi td { border-bottom: 0; border-right-color: #d8dcec; }
.hd { display: flex; align-items: center; gap: 2px; padding-right: 2px; }
.tri { width: 8px; height: 5px; margin-left: auto; flex: none; }
.mini .arr { height: 8px; }
.mini .colbtn { margin-bottom: 0; }
.navi hr { width: 100%; margin: 5px 0 0; border: 0; height: 7px; border-top: 1px solid #fff; border-bottom: 1px solid #666; }
.filter { display: flex; align-items: flex-start; padding-top: 4px; gap: 3px; }
.filter > span { padding-top: 12px; }
.filter .check { gap: 2px; height: 18px; padding-top: 4px; margin-right: -4px; }
.filter .btn { width: 72px; margin-left: auto; }
.ftext { padding-left: 34px; height: 16px; margin-top: -2px; }
.search { display: flex; align-items: center; padding-top: 6px; gap: 8px; }
.search .btn { width: 90px; margin-left: auto; }
.navi > .list { flex: 1; min-height: 0; }
.clip { flex: 1; overflow: hidden; min-width: 0; }
.list tbody tr:nth-child(even):not(.sel) td { background: #ccdaf7; }
.count { text-align: center; padding: 3px 0; }
.pager { border-top: 1px solid #fff; border-bottom: 1px solid #d0d0e0; height: 24px; justify-content: center; gap: 1px; margin-bottom: 7px; }

.window { position: absolute; border: 1px solid #8a8a92; background: #f2f2ff; box-shadow: 3px 4px 10px rgba(0, 0, 0, .35), 0 0 8px rgba(0, 0, 0, .25); }
.pick { left: 338px; top: 209px; width: 604px; }
.ask { left: 208px; top: 316px; width: 591px; border-color: #555; padding-bottom: 13px; }
.title { display: flex; align-items: center; height: 30px; background: #fff; padding: 0 4px 0 8px; gap: 5px; font-family: "Open Sans", sans-serif; font-size: 12px; }
.title .tb { margin-left: auto; width: 22px; }
.title.dim { color: #909090; }
.body { padding: 12px 12px 16px; }
.choose { height: 203px; }
.foot { display: flex; justify-content: flex-end; gap: 18px; padding-top: 5px; }
.foot .btn { width: 84px; }
.foot .btn.hot { width: 140px; }
.helpline { display: flex; justify-content: flex-end; align-items: center; height: 19px; margin: 0 0 0 2px; border-bottom: 1px solid #8c8c90; gap: 2px; padding-top: 2px; }
.msg { display: flex; align-items: center; gap: 14px; padding: 11px 10px 0; }
.msg p { white-space: nowrap; }
.yesno { display: flex; justify-content: center; gap: 6px; padding: 10px 2px 0 0; }
.yesno .btn { width: 44px; }
.badge { position: absolute; width: 30px; height: 30px; border-radius: 50%; background: #0080ff; color: #fff; font: 17px/30px "Noto Sans", sans-serif; text-align: center; }
.b1 { left: -23px; top: 33px; }
.b2 { left: -19px; top: 59px; }
.b3 { left: 317px; top: 247px; }
.b4 { left: 216px; top: 100px; }
```
